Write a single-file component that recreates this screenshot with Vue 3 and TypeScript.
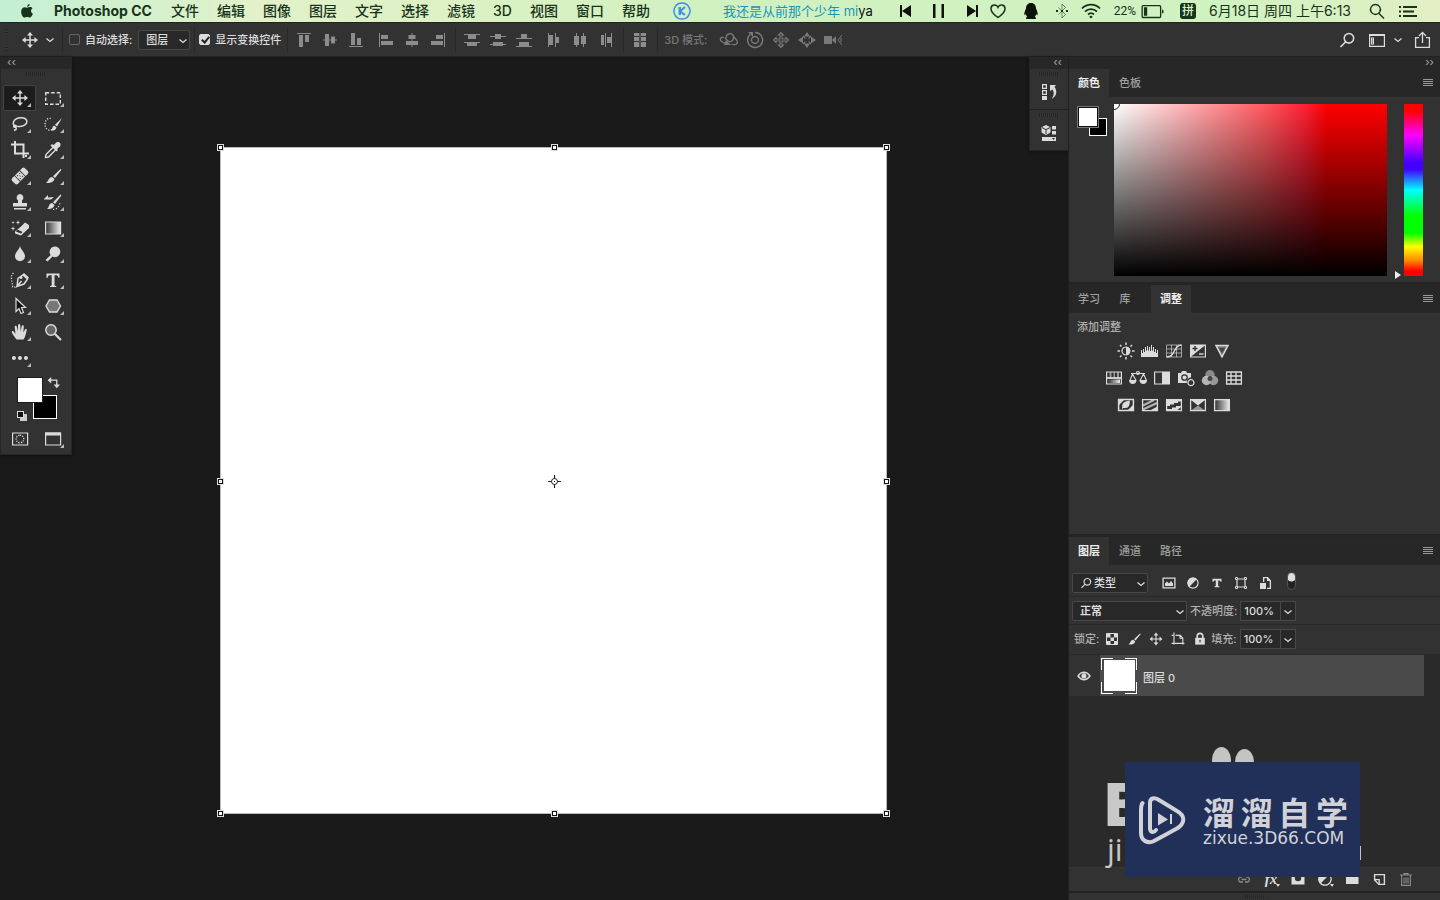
<script setup lang="ts">
import { h, ref } from 'vue'

const f = (d: string, extra = '') => `<path fill="currentColor" d="${d}" ${extra}/>`
const s = (d: string, w = 1.3, extra = '') =>
  `<path fill="none" stroke="currentColor" stroke-width="${w}" d="${d}" ${extra}/>`

const fourWay = s('M10 4v12M4 10h12', 1.4) + f('M10 2l3 3.6H7zM10 18l3-3.6H7zM2 10l3.6-3v6zM18 10l-3.6-3v6z')
const lens = s('M12 3.500a4.800 4.800 0 1 1-.1 0zM8.500 12L3.500 17', 1.6)

const glyphs: Record<string, string> = {
  apple: f('M13 2.200c.2 1.500-1.300 3.200-2.900 3.200-.2-1.500 1.300-3.100 2.900-3.200zM10.300 6.300c.8 0 1.600-.8 3-.8 1.200 0 2.200.6 2.900 1.500-2.600 1.600-2.100 4.900.4 6-.7 1.900-2.100 4.300-3.600 4.300-1.100 0-1.500-.7-2.800-.7s-1.800.7-2.800.7C5.300 17.300 3.500 13.500 3.500 10.700c0-3 1.900-4.900 3.900-4.900 1.200 0 2.100.5 2.900.5z'),
  k: s('M10 2a8 8 0 1 1-.1 0z', 1.5) + s('M7.500 6v8M13 6l-5 4.200 5 3.800M8 6v8', 1.9),
  prev: f('M4 4h2v12H4zM15 4v12l-9-6z'),
  pause: f('M4 3h2.500v14H4zM12.500 3H15v14h-2.500z'),
  next: f('M5 4v12l9-6zM14 4h2v12h-2z'),
  heart: s('M10 16.500C2.500 11.500 3 8.500 3 7.600c0-4 5.500-4.900 7-1.300 1.500-3.600 7-2.700 7 1.300 0 .9.5 3.900-7 8.900z', 1.5),
  qq: f('M10 2c3.500 0 5 2.500 5 5.500 1 2 2.200 5 1.500 6.500-.5.500-1-.5-1.400-1-.2 1.500-.8 2.300-1.400 3 2 .5 1.500 2 .3 2H6c-1.200 0-1.700-1.500.3-2-.6-.7-1.200-1.500-1.400-3-.4.5-.9 1.500-1.400 1-.7-1.500.5-4.500 1.500-6.500C5 4.500 6.500 2 10 2z'),
  bt: s('M6.500 6.500l7 7L10 17V3l3.500 3.500-7 7', 1, 'opacity=".55"') + f('M4 9h2v2H4zM9 9h2v2H9zM14 9h2v2h-2z'),
  wifi: s('M1 7.500a12.500 12.500 0 0 1 18 0M4 10.600a8.500 8.500 0 0 1 12 0M7 13.500a4.500 4.500 0 0 1 6 0', 1.8) + f('M10 14.500l1.800 1.300L10 17.500l-1.800-1.700z'),
  battery: s('M1.600 5.100h14.800a1 1 0 0 1 1 1v8.800a1 1 0 0 1-1 1H1.600a1 1 0 0 1-1-1V6.100a1 1 0 0 1 1-1z', 1.2) + f('M2.200 6.600h3v7.800h-3zM18.700 8.500l1.300 1v2l-1.300 1z'),
  find: s('M8.500 3.500a5 5 0 1 1-.1 0zM12 12.500l5 5', 1.4),
  list: f('M1 5h2v2H1zM1 9.500h2v2H1zM1 14h2v2H1zM5 5h14v2H5zM5 9.500h11v2H5zM5 14h14v2H5z'),
  move: fourWay,
  lens,
  chev: s('M6.500 8.500l3.500 3 3.500-3', 1.3),
  workspace: s('M2.600 4.600h14.800v11.800H2.600z', 1.2) + f('M2 4h16v2H2zM4 7.500h3v7H4z') + '<path d="M5 9h1M5 11h1M5 13h1" stroke="#323232"/>',
  share: s('M7 7.600H3.600v9.800h13.800V7.600H14M10.500 13V2.500M7 6l3.500-3.600L14 6', 1.3),
  at: f('M3 3h14v1H3zM5 5h4v12H5zM11 5h4v7h-4z'),
  am: f('M3 9.500h14v1H3zM5 4h4v12H5zM11 6.500h4v7h-4z'),
  ab: f('M3 16h14v1H3zM5 3h4v12H5zM11 8h4v7h-4z'),
  al: f('M3 3h1v14H3zM5 5h7v4H5zM5 11h12v4H5z'),
  ac: f('M9.500 3h1v14h-1zM6.500 5h7v4h-7zM4 11h12v4H4z'),
  ar: f('M16 3h1v14h-1zM8 5h7v4H8zM3 11h12v4H3z'),
  dt: f('M2 4h16v1H2zM6 5h8v4H6zM2 12h16v1H2zM5 13h10v3H5z'),
  dm: f('M2 6h16v1H2zM7 4h6v5H7zM2 14h16v1H2zM5 12h10v4H5z'),
  db: f('M2 8h16v1H2zM7 4h6v4H7zM2 16h16v1H2zM5 12h10v4H5z'),
  dl: f('M4 3h1v14H4zM5 5h4v10H5zM11 3h1v14h-1zM12 7h3v6h-3z'),
  dc: f('M6 3h1v14H6zM4 6h5v9H4zM13 3h1v14h-1zM11 6h5v8h-5z'),
  dr: f('M9 3h1v14H9zM5 5h3v10H5zM15 3h1v14h-1zM11 7h4v6h-4z'),
  auto: f('M4 3h5v3H4zM4 7h5v4H4zM4 12h5v5H4zM11 3h5v3h-5zM11 7h5v4h-5zM11 12h5v5h-5zM9.700 3h.6v14h-.6z'),
  orbit: s('M6 13C0 12 0 6 5 7.500M12.500 14c5 2 7-1 5-4l-3-3.500M7 8c0-5 7.500-6 7.500-1s-4 5-5.500 4L6 8', 1.3) + f('M7 10l5 5H5z'),
  roll: s('M5 4.500a7.500 7.500 0 1 0 5-2M10 6.500a3.500 3.500 0 1 1-.1 0z', 1.4) + f('M3 2h5v5z'),
  pan: s('M10 2.500L7.500 5H9v4H5V7.500L2.500 10 5 12.500V11h4v4H7.500l2.500 2.500 2.500-2.500H11v-4h4v1.500l2.500-2.500L15 7.500V9h-4V5h1.500z', 1.1),
  slide: f('M10 2l3 4.500H7zM10 18l3-4.500H7zM1 10l5-3.500v7zM19 10l-5-3.500v7z') + s('M6 6l8 8M14 6l-8 8', 1.2, 'stroke-dasharray="3.500 4.500"'),
  video: f('M1 6h8v8H1zM9 10l4-4v8z') + s('M19 5l-4 5 4 5M18 8v4', 1),
  marquee: s('M2.700 4.700h14.600v11.600H2.700z', 1.4, 'stroke-dasharray="3.500 2"'),
  lasso: s('M6 13C1 11 3 4 11 3.700c8-.2 8 7.500-1 8.800-2 .2-3.500-.3-4-.8-1-1-3 0-2 1.300 1.200 1.200 3-.3 2 2.500l-2 1', 1.5),
  quick: s('M9 15.500c-4 2-7-1-7-5.500s4-7 7-5', 1.300, 'stroke-dasharray="1.200 1.500"') + f('M19 4l-5 8.500-2-1.700zM11.200 11.500l2.300 2c-1 3-3.500 3.500-5.500 3 1.500-1 1-4 3.200-5z'),
  crop: s('M5 1v12.500h14M1 4.500h12.500V18', 2) + f('M15 15h2v2h-2z'),
  dropper: f('M12 4c2-4 7.500-1 5 2.500l-3 2.500 1 1-1.500 1.500-6-6L9 4l1 1z') + s('M10 7.500l-7 7-.5 3L5.500 17l7-7', 1.4),
  heal: `<g transform="rotate(-45 10 10)">${f('M3 6h3v8H3a2 2 0 0 1-2-2V8a2 2 0 0 1 2-2zM14 6h3a2 2 0 0 1 2 2v4a2 2 0 0 1-2 2h-3zM6.800 6h6.400v8H6.800z')}<path stroke="#323232" stroke-width="1.200" d="M8 8h1M11 8h1M9.500 10h1M8 12h1M11 12h1"/></g>`,
  brush: f('M17.500 3l1 .7L12 12l-2-1.700zM9.200 11l2.300 2c-1 4-5.500 4-8.500 4 2.500-1.500 2.500-6 6.200-6z'),
  stamp: f('M10 2a3.500 3.500 0 0 1 2 6.300V11h5v3.500H3V11h5V8.300A3.500 3.500 0 0 1 10 2zM4 16h12v1.500H4z'),
  history: f('M17.500 2.500l1 .7L12 12l-2-1.700zM9.200 11l2.300 2c-1 4-4.500 4-7.500 4 2.500-1.500 1.500-6 5.200-6zM1 7l4-4v2.500l6-.5-3 2.500H1z') + s('M10 17.500c4 0 7-3 7-8', 1.2, 'stroke-dasharray="1.200 1.800"'),
  eraser: f('M11 8.500l4-4 4 2.500v3l-8 7.500-6-2v-2z') + '<path d="M5.800 13.600l5.200 1.900 1.500-1.500-5-2.400z" fill="#323232"/>' + f('M8 2l.6 1.900 1.900.6-1.900.6L8 7l-.6-1.900-1.900-.6 1.900-.6zM3 3l.4 1.100 1.100.4-1.100.4L3 6l-.4-1.100-1.100-.4 1.100-.4zM3 8l.6 1.900 1.900.6-1.900.6L3 13l-.6-1.900-1.900-.6 1.900-.6z'),
  gradient: '<defs><linearGradient id="gt"><stop stop-color="#333"/><stop offset="1" stop-color="#eee"/></linearGradient></defs><path d="M2.600 4h15v12h-15z" fill="url(#gt)" stroke="#dcdcdc" stroke-width="1.200"/>',
  drop: f('M10 2c1 4 5 6.500 5 10.300a5 5 0 0 1-10 0C5 8.500 9 6 10 2z'),
  dodge: f('M12 2.500a5.300 5.300 0 1 1-2.500 10L4.500 17.500 2.500 16l5.200-5A5.300 5.300 0 0 1 12 2.500z'),
  pen: s('M7 16.500l1-8 5-3.500 4.500 4-3.500 5-7 2.500 4.500-5.500', 1.5) + f('M14 3l5 4.500-1.500 1.500L12.500 4.500zM11 9a1.500 1.500 0 1 1 .1 0z') + s('M3.500 3C-1 7 3 12 2.500 17H5', 1.2, 'stroke-dasharray="1.200 1.500"'),
  type: f('M3.500 3.500h13v4.200h-1.200c-.3-1.800-.8-2.400-2.500-2.400h-1.300v9.700c0 .8.600 1 1.700 1v1H7v-1c1.200 0 1.700-.2 1.700-1V5.300H7.200c-1.700 0-2.200.6-2.500 2.400H3.500z'),
  typeBold: f('M2.500 3h15v5h-1.800c-.3-1.800-1-2.300-2.500-2.300H12V14c0 1 .6 1.300 2 1.300V17H6v-1.700c1.400 0 2-.3 2-1.300V5.700H6.800C5.300 5.700 4.600 6.200 4.300 8H2.500z'),
  select: '<path d="M6 2.500v13l3-3 2 5 2.500-1-2-5h4z" fill="#111" stroke="#dcdcdc" stroke-width="1.200"/>',
  poly: '<path d="M6.500 4h7.500l3.500 6-3.500 6H6.500L3 10z" fill="#777" stroke="#dcdcdc" stroke-width="1.400"/>',
  hand: f('M6.500 17.500C4 14 2.500 12 1.700 10.200c-.2-1.500 1.300-1.500 2.200-.4L5.500 12 4.700 5c.1-1.500 1.800-1.500 2.100-.2l1 4.700.3-6.500c.2-1.400 2-1.400 2.200 0l.3 6.500 1.200-5.400c.4-1.200 2-1 2 .3l-.5 6 1.700-3c.8-1 2.100-.4 1.700.8-1 4-1.300 6.500-3.200 9.300z'),
  zoom: '<circle cx="8" cy="8" r="5.200" fill="#666" stroke="#dcdcdc" stroke-width="1.500"/>' + s('M12 12l6 6', 2.2),
  dots: f('M4 8a2 2 0 1 1-.1 0zM10 8a2 2 0 1 1-.1 0zM16 8a2 2 0 1 1-.1 0z'),
  swap: s('M6 6.500h7.500V14', 1.6) + f('M6.500 2.500v8L2 6.500zM9.500 12h8l-4 4.500z'),
  mask: s('M2.600 4h15v12h-15z', 1.2) + s('M10 6.200a3.800 3.800 0 1 1-.1 0z', 1.3, 'stroke-dasharray="1.200 1.200"'),
  screen: s('M2.600 4h15v12h-15z', 1.2) + f('M2 3.500h16v3H2z'),
  hist: s('M3.600 2.600h3.800v3.800H3.600zM3.600 8.600h3.800v3.800H3.600z', 1.2) + f('M3 14h5v4H3zM11 3l6 0-1.500 2c3 4 2.500 9-3 12 3-4 2.500-7 1-9.500L11 9z'),
  lib: f('M7 2l4.500 2.300v5.200L7 12 2.500 9.500V4.300z') + '<path d="M3 4.600l4 2 4-2M7 6.600V11" stroke="#323232" fill="none"/>' + f('M13 3h4v3.500h-4zM13 8h4v3.500h-4zM3 14h14v4H3z') + '<path d="M13 15h3l-1.500 2z" fill="#323232"/>',
  sun: s('M10 6a4 4 0 1 1-.1 0z', 1.2) + f('M10 6a4 4 0 0 1 0 8z') + s('M10 1.500v2.500M10 16v2.500M1.500 10H4M16 10h2.500M4 4l1.500 1.500M14.500 14.500L16 16M4 16l1.500-1.500M14.500 5.500L16 4', 1.5),
  levels: f('M1 16V9h1v3h1V8h1v3h1V6h1v4l1-1V5h1v5l1-1V6h1v4h1V4h1v6l1-1V6h1v5h1V8h1v4h1V9h1v7z'),
  curves: s('M2.500 4h15v12h-15zM7.500 4v12M12.500 4v12M2.500 8h15M2.500 12h15', .8, 'opacity=".8"') + s('M2.500 16C12 16 9 4 17.500 4', 1.4),
  expo: s('M2.600 4h14.800v12H2.600z', 1.2) + f('M2.600 4h14.800L2.600 16z') + '<path d="M4.500 7.500h5M7 5v5" stroke="#323232" stroke-width="1.400"/>' + s('M11 13h4.500', 1.4),
  vib: '<path d="M4 4.500h12L10 16z" fill="#777" stroke="#dcdcdc" stroke-width="1.500"/><path d="M7 7h6l-3 5z" fill="#444"/>',
  hue: s('M2.600 4h14.800v12H2.600z', 1.2) + s('M2.600 10h14.800', 1.8) + f('M5.500 4h2v6h-2zM9.500 4h1.500v6H9.500zM13 4h2v6h-2z', 'opacity=".6"') + '<path d="M4 11.500h12v3.500H4z" fill="url(#gt)"/>',
  balance: s('M3 5.500h14M10 3.500a1.500 1.500 0 1 1-.1 0zM4.500 6L2 12.500M4.500 6L8 12.500M15.500 6L12 12.500M15.500 6L18.500 12.500', 1.1) + f('M1 12h7.500c0 2.500-1.500 4-3.700 4S1 14.500 1 12zM11.500 12H19c0 2.500-1.500 4-3.700 4s-3.800-1.500-3.800-4z'),
  bw: s('M2.600 4h14.800v12H2.600z', 1.2) + f('M10 4h7.400v12H10z'),
  camera: f('M2 5h3l1-2h4l1 2h4v4.500a4 4 0 0 0-4 5.500H2z') + '<circle cx="8.500" cy="9.500" r="2.700" fill="#dcdcdc" stroke="#323232" stroke-width="1.300"/>' + s('M15 11.700a3 3 0 1 1-.1 0z', 1.3),
  mixer: '<circle cx="10" cy="6.700" r="4.700" fill="#8a8a8a"/><circle cx="6.500" cy="12.500" r="4.700" fill="#ccc" fill-opacity=".85"/><circle cx="13.500" cy="12.500" r="4.700" fill="#aaa" fill-opacity=".85"/><circle cx="10" cy="10.500" r="2.500" fill="#444"/>',
  grid: s('M2.600 4h14.800v12H2.600zM7 4v12M12 4v12M2.600 8h14.800M2.600 12h14.800', 1.3),
  invert: s('M2.600 4.600h14.800v11H2.600z', 1.5) + f('M3 5h5L3 10z') + f('M17 15h-5l5-5z') + f('M6 14l.3-4C7 6.500 11 6 14 5.500l-.5 4c-1 4-4.500 3.700-6 3.500z'),
  poster: s('M2.600 4.600h14.800v11H2.600z', 1.3) + s('M3 10.500L14 5M3 14.500L17 8', 2.2, 'opacity=".75"') + f('M10 15.500l7.400-4v4z'),
  thresh: s('M2.600 4.600h14.800v11H2.600z', 1.3) + f('M3 5h14v1.500h-3V8h-4v1.500H6V11H3zM3 14h5v-1.500h4V11h5v1l-4 3.500H3z'),
  selcol: s('M2.600 4.600h14.800v11H2.600z', 1.3) + f('M3 5h14l-7 5.500z') + f('M3 15.500h14l-7-5z', 'opacity=".6"'),
  gmap: '<path d="M2.600 4.600h14.800v11H2.600z" fill="url(#gt)" stroke="#dcdcdc" stroke-width="1.300"/>',
  image: s('M4.100 5.100h11.800v9.800H4.100z', 1.3) + f('M6 13v-2.500l2-2 2 2 2-2.500 2 2.500V13z'),
  half: s('M10 4.800a5.200 5.200 0 1 1-.1 0z', 1.2) + f('M13.700 6.300a5.200 5.200 0 0 0-7.400 7.400z'),
  halfBig: s('M10 3.800a6.200 6.200 0 1 1-.1 0z', 1.2) + f('M14.400 5.600a6.200 6.200 0 0 0-8.800 8.800z'),
  shape: s('M6 6h8v8H6z', 1.2) + '<path d="M4.500 4.500h2v2h-2zM13.500 4.500h2v2h-2zM4.500 13.500h2v2h-2zM13.500 13.500h2v2h-2z" fill="#323232" stroke="currentColor"/>',
  smart: s('M8.600 9V4.600h4L15.400 8v7.400H12', 1.300) + f('M5 10h6v6H5zM12 4l4 4h-4z'),
  checker: s('M4.500 4.500h11v11h-11z', 1) + f('M5 5h3.500v3.500H5zM12 5h3.500v3.500H12zM8.500 8.500H12V12H8.500zM5 12h3.500v3.500H5zM12 12h3.500v3.500H12z'),
  artlock: s('M5 2v15M2 5.500h2M7 5.500h6l3 3.500v8M2 15.500h16M12.500 5.500V9H16', 1.4),
  lock: f('M4 8.500h12V17H4z') + s('M6.500 9V6.500a3.500 3.500 0 0 1 7 0V9', 2) + '<path d="M10 11v3" stroke="#323232" stroke-width="1.600"/>',
  eye: s('M4 10c3.500-5 8.500-5 12 0-3.500 5-8.500 5-12 0z', 1.4) + f('M10 7.300a2.600 2.600 0 1 1-.1 0z'),
  link: s('M8 8H6a3 3 0 0 0 0 5h3M12 8h2a3 3 0 0 1 0 5h-3M7.500 10.500h5', 1.3),
  maskadd: f('M3.500 4.500h13v11h-13z') + '<circle cx="10" cy="9" r="3.200" fill="#323232"/>',
  folder: f('M4 5h5l1 1.500h6.500V15H4z'),
  newl: s('M5.600 5.600h9.800v9.800h-5.500L5.600 11z', 1.4) + s('M5.600 10.600h4.600v4.800', 1.3),
  trash: s('M5.600 6.500v9.900h8.800V6.500M4 6h12M8 6V4.600h4V6M8 8.500v6M10 8.500v6M12 8.500v6', 1.1),
}

const Icon = (p: { n: string }) =>
  h('svg', { class: 'ic', viewBox: '0 0 20 20', 'aria-hidden': 'true', innerHTML: glyphs[p.n] })
Icon.props = ['n']

const menus = ['文件', '编辑', '图像', '图层', '文字', '选择', '滤镜', '3D', '视图', '窗口', '帮助']
const alignA = ['at', 'am', 'ab']
const alignB = ['al', 'ac', 'ar']
const distA = ['dt', 'dm', 'db']
const distB = ['dl', 'dc', 'dr']
const modes = ['orbit', 'roll', 'pan', 'slide', 'video']
const tools = [
  'move', 'marquee', 'lasso', 'quick', 'crop', 'dropper', 'heal', 'brush', 'stamp', 'history', 'eraser',
  'gradient', 'drop', 'dodge', 'pen', 'type', 'select', 'poly', 'hand', 'zoom', 'dots',
]
const adjustments = [
  ['sun', 'levels', 'curves', 'expo', 'vib'],
  ['hue', 'balance', 'bw', 'camera', 'mixer', 'grid'],
  ['invert', 'poster', 'thresh', 'selcol', 'gmap'],
]
const filters = ['image', 'half', 'typeBold', 'shape', 'smart']
const locks = ['checker', 'brush', 'move', 'artlock', 'lock']
const handles = ['nw', 'n', 'ne', 'w', 'e', 'sw', 's', 'se']

const activeTool = ref('move')
const autoSelect = ref(false)
const showTransform = ref(true)
const opacity = ref('100%')
const fill = ref('100%')
</script>

<template>
  <div class="screen">
    <header class="menubar">
      <button class="m apple" aria-label="Apple"><Icon n="apple" /></button>
      <button class="m app">Photoshop CC</button>
      <nav class="menus"><button v-for="m in menus" :key="m" class="m">{{ m }}</button></nav>
      <Icon n="k" class="kg" />
      <div class="status">
        <span class="song"><span class="sung">我还是从前那个少年 mi</span>ya</span>
        <div class="player">
          <Icon n="prev" /><Icon n="pause" /><Icon n="next" />
        </div>
        <Icon n="heart" class="hrt" />
        <Icon n="qq" class="qq" /><Icon n="bt" /><Icon n="wifi" class="wifi" />
        <span class="power">22%<Icon n="battery" class="bat" /></span>
        <span class="ime">拼</span>
        <time class="clock">6月18日 周四 上午6:13</time>
        <Icon n="find" /><Icon n="list" />
      </div>
    </header>

    <div class="options">
      <span class="vgrip"></span>
      <button class="b" aria-label="移动"><Icon n="move" /></button>
      <button class="b" aria-label="预设"><Icon n="chev" /></button>
      <i class="sep"></i>
      <label class="check"><input v-model="autoSelect" type="checkbox" />自动选择:</label>
      <span class="drop d-layer"><select aria-label="自动选择"><option>图层</option></select><Icon n="chev" /></span>
      <i class="sep slim"></i>
      <label class="check"><input v-model="showTransform" type="checkbox" />显示变换控件</label>
      <i class="sep"></i>
      <div class="set"><button v-for="n in alignA" :key="n" class="b" :aria-label="n"><Icon :n="n" /></button></div>
      <div class="set next"><button v-for="n in alignB" :key="n" class="b" :aria-label="n"><Icon :n="n" /></button></div>
      <i class="sep"></i>
      <div class="set"><button v-for="n in distA" :key="n" class="b" :aria-label="n"><Icon :n="n" /></button></div>
      <div class="set next"><button v-for="n in distB" :key="n" class="b" :aria-label="n"><Icon :n="n" /></button></div>
      <i class="sep"></i>
      <div class="set"><button class="b" aria-label="auto"><Icon n="auto" /></button></div>
      <i class="sep"></i>
      <span class="mode">3D 模式:</span>
      <div class="set"><button v-for="n in modes" :key="n" class="b" :aria-label="n"><Icon :n="n" /></button></div>
      <div class="right">
        <button class="b" aria-label="搜索"><Icon n="lens" /></button>
        <button class="b ws" aria-label="工作区"><Icon n="workspace" /></button>
        <button class="b" aria-label="展开"><Icon n="chev" /></button>
        <button class="b" aria-label="共享"><Icon n="share" /></button>
      </div>
    </div>

    <div class="work">
      <aside class="tools">
        <div class="strip">‹‹</div>
        <div class="hgrip"></div>
        <div class="toolgrid">
          <button
            v-for="t in tools"
            :key="t"
            class="tool"
            :class="{ on: t === activeTool, plain: t === 'zoom' }"
            :aria-label="t"
            @click="activeTool = t"
          >
            <Icon :n="t" />
          </button>
        </div>
        <div class="colors">
          <span class="bg"></span><span class="fg"></span>
          <Icon n="swap" class="swap" />
          <span class="mini"></span>
        </div>
        <div class="toolgrid">
          <button class="tool plain" aria-label="mask"><Icon n="mask" /></button>
          <button class="tool" aria-label="screen"><Icon n="screen" /></button>
        </div>
      </aside>

      <main class="stage">
        <div class="artboard">
          <i v-for="p in handles" :key="p" class="handle" :class="p"></i>
          <svg class="pivot" viewBox="0 0 13 13">
            <path d="M6.500 0v4M6.500 9v4M0 6.500h4M9 6.500h4" stroke="#222" stroke-width="1.200" />
            <circle cx="6.500" cy="6.500" r="3" fill="#fff" stroke="#222" />
            <path d="M6 6h1v1H6z" fill="#222" />
          </svg>
        </div>
      </main>

      <aside class="dock">
        <div class="strip end">‹‹</div>
        <div class="dockcell"><div class="hgrip"></div><button class="b" aria-label="历史记录"><Icon n="hist" /></button></div>
        <div class="dockcell"><div class="hgrip"></div><button class="b" aria-label="属性"><Icon n="lib" /></button></div>
      </aside>

      <aside class="panels">
        <div class="strip end">››</div>

        <section class="panel">
          <div class="tabs">
            <button class="tab on">颜色</button><button class="tab">色板</button>
            <button class="burger" aria-label="菜单"></button>
          </div>
          <div class="picker">
            <div class="pair"><span class="bg"></span><span class="fg"></span></div>
            <div class="field"><i class="spot"></i></div>
            <div class="hue"><i class="arrow"></i></div>
          </div>
        </section>

        <section class="panel adjust">
          <div class="tabs">
            <button class="tab">学习</button><button class="tab lib">库</button><button class="tab on">调整</button>
            <button class="burger" aria-label="菜单"></button>
          </div>
          <h3>添加调整</h3>
          <div class="adjgrid">
            <div v-for="(row, i) in adjustments" :key="i" class="adjrow">
              <button v-for="n in row" :key="n" class="b" :aria-label="n"><Icon :n="n" /></button>
            </div>
          </div>
        </section>

        <section class="panel layers">
          <div class="tabs">
            <button class="tab on">图层</button><button class="tab">通道</button><button class="tab">路径</button>
            <button class="burger" aria-label="菜单"></button>
          </div>
          <div class="row first">
            <span class="drop d-kind"><Icon n="lens" class="pre" /><select aria-label="类型"><option>类型</option></select><Icon n="chev" /></span>
            <div class="filters">
              <button v-for="n in filters" :key="n" class="b" :aria-label="n"><Icon :n="n" /></button>
            </div>
            <button class="toggle" aria-label="过滤"></button>
          </div>
          <div class="row">
            <span class="drop d-blend"><select aria-label="混合模式"><option>正常</option></select><Icon n="chev" /></span>
            <label class="num">不透明度:<input v-model="opacity" type="text" /></label>
            <button class="more" aria-label="不透明度"><Icon n="chev" /></button>
          </div>
          <div class="row last">
            <span class="dim">锁定:</span>
            <div class="locks">
              <button v-for="n in locks" :key="n" class="b" :aria-label="n"><Icon :n="n" /></button>
            </div>
            <label class="num">填充:<input v-model="fill" type="text" /></label>
            <button class="more" aria-label="填充"><Icon n="chev" /></button>
          </div>
          <div class="list">
            <div class="layer">
              <button class="vis" aria-label="可见性"><Icon n="eye" /></button>
              <div class="info">
                <span class="thumb"><i></i></span>
                <span class="name">图层 0</span>
              </div>
            </div>
          </div>
          <footer class="foot">
            <button class="b faint" aria-label="链接"><Icon n="link" /></button>
            <button class="b fx tri">fx</button>
            <button class="b" aria-label="蒙版"><Icon n="maskadd" /></button>
            <button class="b tri" aria-label="调整图层"><Icon n="halfBig" /></button>
            <button class="b" aria-label="组"><Icon n="folder" /></button>
            <button class="b" aria-label="新建"><Icon n="newl" /></button>
            <button class="b faint" aria-label="删除"><Icon n="trash" /></button>
          </footer>
          <div class="base"><div class="hgrip"></div></div>
        </section>
      </aside>
    </div>

    <div class="mark">
      <i class="toe a"></i><i class="toe b2"></i>
      <span class="big">B</span><span class="small">ji</span><i class="stub"></i>
      <div class="card">
        <svg class="logo" viewBox="0 0 48 50">
          <path d="M3.500 8C2 10 2 12 2 16v22c0 8 7 11 13 8l22-12c9-5 10-13 1-18L20 5c-5-3-9-2-9 3v25c0 5 4 5 6 2" fill="none" stroke="#d0d2d8" stroke-width="4" stroke-linecap="round" />
          <path d="M19 18l10 6.500-10 6zM31 19h2v10h-2z" fill="#d0d2d8" />
        </svg>
        <div class="words">
          <div class="cn"><span>溜</span><span>溜</span><span>自</span><span>学</span></div>
          <div class="url">zixue.3D66.COM</div>
        </div>
      </div>
    </div>
  </div>
</template>

<style>
html,
body {
  background: #1a1a1a;
}
</style>

<style scoped>
* {
  box-sizing: border-box;
}
.screen {
  position: relative;
  display: flex;
  flex-direction: column;
  height: 100vh;
  overflow: hidden;
  background: #1a1a1a;
  color: #dcdcdc;
  font: 500 11px/16px Inter, 'Noto Sans CJK SC', sans-serif;
}
button,
input,
select {
  margin: 0;
  padding: 0;
  border: 0;
  background: none;
  color: inherit;
  font: inherit;
}
.ic {
  display: block;
  flex: none;
  width: 20px;
  height: 20px;
}
.b {
  flex: none;
  width: 20px;
  height: 20px;
}

/* system menu bar */
.menubar {
  display: flex;
  align-items: center;
  flex: none;
  height: 23px;
  padding: 0 22px 1px 18px;
  border-bottom: 1px solid #222;
  background: linear-gradient(90deg, #c3efd3, #e2f1c8 18%, #dcf1c4 32%, #d0f0c0 50%, #d0f2c0 85%, #e2efc4);
  color: #17331a;
  font-size: 14px;
  line-height: 20px;
  white-space: nowrap;
}
.m {
  flex: none;
}
.apple .ic {
  width: 18px;
  height: 18px;
}
.app {
  width: 100px;
  margin-left: 18px;
  font-weight: 700;
  text-align: left;
}
.menus {
  display: flex;
  gap: 18px;
  margin-left: 17px;
}
.kg {
  margin-left: 22px;
  color: #3b8fe8;
}
.status {
  display: flex;
  align-items: center;
  gap: 11px;
  margin-left: auto;
}
.song {
  margin-right: 12px;
  color: #111;
  font-size: 13px;
  font-weight: 400;
}
.sung {
  color: #1a95b8;
}
.player {
  display: flex;
  gap: 13px;
  color: #111;
}
.hrt {
  margin-left: -5px;
}
.qq {
  margin-left: 2px;
  color: #0a120a;
}
.wifi {
  margin-left: -2px;
}
.power {
  display: flex;
  align-items: center;
  gap: 5px;
  margin: 0 5px 0 2px;
  font-family: Roboto, sans-serif;
  font-size: 12px;
  font-weight: 400;
}
.bat {
  width: 23px;
  height: 22px;
}
.ime {
  width: 16px;
  height: 16px;
  margin: 0 2px 0 0;
  border-radius: 3px;
  background: #17331a;
  color: #d6f2c4;
  font-size: 12px;
  line-height: 16px;
  text-align: center;
}
.clock {
  margin-right: 5px;
  font-weight: 400;
}

/* options bar */
.options {
  display: flex;
  align-items: center;
  flex: none;
  height: 34px;
  padding: 0 8px 0 5px;
  border-bottom: 1px solid #222;
  background: #323232;
  white-space: nowrap;
}
.vgrip {
  width: 3px;
  height: 22px;
  margin-right: 12px;
  background: repeating-linear-gradient(#252525 0 1px, #363636 1px 3px);
}
.sep {
  flex: none;
  width: 1px;
  height: 24px;
  margin: 0 6px 0 2px;
  background: #282828;
}
.sep.slim {
  margin-right: 4px;
}
.check {
  display: flex;
  align-items: center;
  gap: 5px;
}
.check + .drop {
  margin: 0 2px 0 6px;
}
.check + .sep {
  margin-left: 6px;
}
.check input {
  appearance: none;
  width: 11px;
  height: 11px;
  border: 1px solid #666;
  border-radius: 2px;
}
.check input:checked {
  border-color: #dcdcdc;
  background: #dcdcdc;
}
.check input:checked::after {
  content: '';
  display: block;
  width: 3px;
  height: 6px;
  margin: 0 0 0 3px;
  border: solid #222;
  border-width: 0 2px 2px 0;
  transform: rotate(40deg);
}
.drop {
  display: flex;
  align-items: center;
  position: relative;
  height: 20px;
  border: 1px solid #484848;
  border-radius: 2px;
  background: #282828;
}
.drop select {
  flex: 1;
  height: 18px;
  padding: 0 18px 0 7px;
  appearance: none;
}
.drop .ic:last-child {
  position: absolute;
  right: -4px;
  top: 0;
  pointer-events: none;
}
.d-layer {
  width: 52px;
}
.set {
  display: flex;
  gap: 6px;
  margin-right: 5px;
  color: #8c8c8c;
}
.set.next {
  margin-left: 5px;
}
.mode {
  width: 50px;
  margin-right: 5px;
  color: #777;
}
.mode + .set {
  color: #7a7a7a;
}
.right {
  display: flex;
  gap: 4px;
  margin-left: auto;
}
.right .ws {
  margin: 0 -3px 0 6px;
}

/* workspace */
.work {
  display: flex;
  flex: 1;
  align-items: flex-start;
  min-height: 0;
}
.strip {
  height: 12px;
  padding: 0 6px;
  background: #272727;
  color: #999;
  font-size: 11px;
  line-height: 10px;
}
.strip.end {
  text-align: right;
}
.hgrip {
  width: 20px;
  height: 4px;
  margin: 0 auto;
  background: repeating-linear-gradient(90deg, #242424 0 1px, #363636 1px 2px);
}
.tools {
  flex: none;
  width: 72px;
  padding-bottom: 2px;
  border: solid #262626;
  border-width: 0 1px 1px;
  background: #323232;
  box-shadow: 0 1px 3px #111;
}
.tools .hgrip {
  margin: 3px auto 9px;
}
.toolgrid {
  display: grid;
  grid-template-columns: 33px 33px;
  padding-left: 2px;
}
.tool {
  display: grid;
  place-items: center;
  position: relative;
  height: 26px;
  border: 1px solid transparent;
  border-radius: 2px;
  color: #dcdcdc;
}
.tool::after {
  content: '';
  position: absolute;
  right: 4px;
  bottom: 3px;
  border: 2px solid;
  border-color: transparent #bbb #bbb transparent;
}
.tool.plain::after {
  display: none;
}
.tool.on {
  background: #1c1c1c;
  border-color: #434343;
}
.colors {
  position: relative;
  height: 55px;
}
.fg,
.bg {
  position: absolute;
  border: 1px solid #fff;
}
.colors .fg {
  left: 16px;
  top: 6px;
  width: 26px;
  height: 26px;
  background: #fff;
  border-color: #1d1d1d;
}
.colors .bg {
  left: 32px;
  top: 24px;
  width: 24px;
  height: 24px;
  background: #000;
}
.swap {
  position: absolute;
  left: 45px;
  top: 4px;
  width: 16px;
  height: 16px;
}
.mini {
  position: absolute;
  left: 16px;
  top: 40px;
  width: 7px;
  height: 7px;
  border: 1px solid #ddd;
  background: #111;
  box-shadow: 3px 3px 0 #ccc;
}

.stage {
  display: flex;
  flex: 1;
  align-self: stretch;
  padding: 90px 142px 86px 148px;
}
.artboard {
  position: relative;
  flex: 1;
  border: 1px solid #bbb;
  background: #fff;
}
.handle {
  position: absolute;
  width: 7px;
  height: 7px;
  margin: -4px;
  border: 1px solid #ddd;
  background: linear-gradient(#fff, #fff) center / 3px 3px no-repeat #111;
}
.nw, .n, .ne { top: 0; }
.w, .e { top: calc(50% + 1px); }
.sw, .s, .se { top: calc(100% + 1px); }
.nw, .w, .sw { left: 0; }
.n, .s { left: calc(50% + 1px); }
.ne, .e, .se { left: calc(100% + 1px); }
.pivot {
  position: absolute;
  top: 50%;
  left: 50%;
  width: 13px;
  height: 13px;
  margin: -6px;
}

.dock {
  flex: none;
  width: 39px;
  border-left: 1px solid #262626;
  background: #323232;
  box-shadow: 0 1px 3px #111;
}
.dockcell {
  display: grid;
  align-content: start;
  justify-items: center;
  gap: 6px;
  height: 41px;
  padding-top: 3px;
  border-bottom: 1px solid #222;
}

.panels {
  display: flex;
  flex: none;
  flex-direction: column;
  align-self: stretch;
  width: 372px;
  border-left: 1px solid #202020;
  background: #323232;
}
.panels .strip {
  flex: none;
}
.tabs {
  display: flex;
  height: 28px;
  border-bottom: 1px solid #2a2a2a;
  background: #272727;
}
.tab {
  width: 40px;
  margin-right: 1px;
  color: #a0a0a0;
}
.tab.on {
  height: 28px;
  background: #323232;
  color: #eee;
  font-weight: 700;
}
.tab.lib {
  padding-right: 10px;
}
.burger {
  width: 10px;
  height: 8px;
  margin: 10px 7px 0 auto;
  background: repeating-linear-gradient(#999 0 1px, transparent 1px 2px);
}
.panel {
  flex: none;
  border-bottom: 3px solid #252525;
}
.picker {
  display: flex;
  height: 185px;
  padding: 7px 17px 6px 9px;
}
.pair {
  position: relative;
  flex: none;
  width: 36px;
}
.pair .fg {
  left: 0;
  top: 3px;
  width: 20px;
  height: 20px;
  background: #fff;
  border-color: #111;
  outline: 1px solid #777;
}
.pair .bg {
  right: 7px;
  top: 14px;
  width: 18px;
  height: 18px;
  background: #000;
}
.field {
  position: relative;
  flex: 1;
  overflow: hidden;
  background: linear-gradient(transparent, #000), linear-gradient(90deg, #fff, #ff5a60 55%, #ff2034 70%, #f00 78%);
}
.spot {
  position: absolute;
  left: -6px;
  top: -6px;
  width: 12px;
  height: 12px;
  border: 1px solid #222;
  border-radius: 50%;
}
.hue {
  position: relative;
  flex: none;
  width: 19px;
  margin-left: 17px;
  background: linear-gradient(#f00 4%, #f0f 18%, #40f 34%, #40f 38%, #0ff 50%, #0f0 65%, #0f0 75%, #ff0 83%, #f80 91%, #f00 97%);
}
.arrow {
  position: absolute;
  left: -9px;
  bottom: -3px;
  border: solid transparent;
  border-width: 4px 0 4px 6px;
  border-left-color: #eee;
}
.adjust {
  height: 252px;
}
h3 {
  margin: 6px 8px 6px;
  color: #b0b0b0;
  font: inherit;
}
.adjgrid {
  display: grid;
  gap: 7px;
  width: 210px;
}
.adjrow {
  display: flex;
  justify-content: center;
  gap: 4px;
}

.layers {
  display: flex;
  flex: 1;
  flex-direction: column;
  min-height: 0;
  border: 0;
}
.layers .tabs {
  flex: none;
}
.row {
  display: flex;
  align-items: center;
  flex: none;
  height: 28px;
  padding: 0 4px 0 3px;
  border-bottom: 1px solid #292929;
}
.row.first {
  height: 32px;
  padding-top: 4px;
}
.row.last {
  height: 30px;
  padding-bottom: 2px;
}
.d-kind {
  width: 76px;
}
.d-kind .pre {
  width: 14px;
  height: 14px;
  margin-left: 6px;
}
.d-kind select {
  padding: 0 0 0 1px;
}
.filters {
  display: flex;
  gap: 4px;
  margin-left: 11px;
}
.filters .b:nth-child(3) .ic {
  width: 12px;
  height: 12px;
  margin: 0 auto;
}
.toggle {
  width: 9px;
  height: 18px;
  margin: 0 0 4px 12px;
  border: 1px solid #555;
  border-radius: 5px;
  background: radial-gradient(circle at 50% 4px, #ddd 4px, #222 5px);
}
.d-blend {
  width: 115px;
  font-weight: 700;
}
.num {
  display: flex;
  align-items: center;
  gap: 3px;
  margin-left: 3px;
  color: #b0b0b0;
}
.num input {
  width: 41px;
  height: 20px;
  padding-left: 3px;
  border: 1px solid #484848;
  background: #282828;
  color: #dcdcdc;
}
.more {
  width: 15px;
  height: 20px;
  border: 1px solid #484848;
  border-left: 0;
  background: #282828;
}
.more .ic {
  margin-left: -3px;
}
.dim {
  margin-left: 2px;
  color: #b0b0b0;
}
.locks {
  display: flex;
  gap: 2px;
  margin: 0 -2px 0 3px;
}
.locks .ic {
  width: 16px;
  height: 16px;
  margin: 0 auto;
}
.locks .b:first-child .ic {
  width: 20px;
  height: 20px;
}
.list {
  flex: 1;
  min-height: 0;
  background: #2a2a2a;
}
.layer {
  display: flex;
  height: 41px;
  padding-right: 16px;
}
.vis {
  width: 31px;
  padding-left: 5px;
  background: #323232;
}
.info {
  display: flex;
  align-items: center;
  flex: 1;
  gap: 6px;
  padding-left: 1px;
  background: #4a4a4a;
}
.name {
  padding-top: 4px;
}
.thumb {
  display: grid;
  place-items: center;
  position: relative;
  width: 36px;
  height: 36px;
  border: 1px solid #fff;
}
.thumb::before,
.thumb::after {
  content: '';
  position: absolute;
  background: #4a4a4a;
}
.thumb::before {
  inset: -1px 11px;
}
.thumb::after {
  inset: 11px -1px;
}
.thumb i {
  z-index: 1;
  width: 31px;
  height: 31px;
  background: #fff;
}
.foot {
  display: flex;
  flex: none;
  justify-content: flex-end;
  gap: 7px;
  height: 24px;
  padding: 1px 24px 0 0;
  border-top: 1px solid #363636;
}
.fx {
  font: italic 700 15px/18px 'Liberation Serif', serif;
}
.tri {
  position: relative;
}
.tri::after {
  content: '';
  position: absolute;
  right: 1px;
  bottom: 2px;
  border: solid transparent;
  border-width: 3px 2px 0;
  border-top-color: #ddd;
}
.faint {
  color: #8c8c8c;
}
.base {
  flex: none;
  height: 9px;
  padding-top: 2px;
  border-top: 2px solid #222;
}

/* watermark over the layers panel */
.mark {
  position: absolute;
  right: 79px;
  bottom: 23px;
  width: 256px;
  height: 130px;
  color: #c8c8c8;
}
.toe {
  position: absolute;
  top: 0;
  left: 107px;
  width: 19px;
  height: 26px;
  border-radius: 50%;
  background: #c4c4c4;
}
.b2 {
  top: 2px;
  left: 130px;
}
.big,
.small {
  position: absolute;
  left: -2px;
  top: 34px;
  font: 800 60px/44px 'Open Sans', sans-serif;
}
.small {
  left: 2px;
  top: 88px;
  font: 500 31px/28px 'Open Sans', sans-serif;
}
.stub {
  position: absolute;
  right: 0;
  bottom: 17px;
  width: 2px;
  height: 14px;
  background: #c4c4c4;
}
.card {
  display: flex;
  align-items: center;
  position: absolute;
  right: 1px;
  bottom: 0;
  width: 235px;
  height: 115px;
  padding: 0 12px 0 14px;
  background: #213058;
  color: #d0d2d8;
}
.logo {
  flex: none;
  width: 48px;
  height: 50px;
}
.words {
  flex: 1;
  margin-left: 16px;
}
.cn {
  display: flex;
  justify-content: space-between;
  margin-bottom: 2px;
  font: 700 32px/34px 'Noto Sans CJK SC', sans-serif;
}
.url {
  font: 400 17px/16px 'DejaVu Sans', sans-serif;
}
</style>
